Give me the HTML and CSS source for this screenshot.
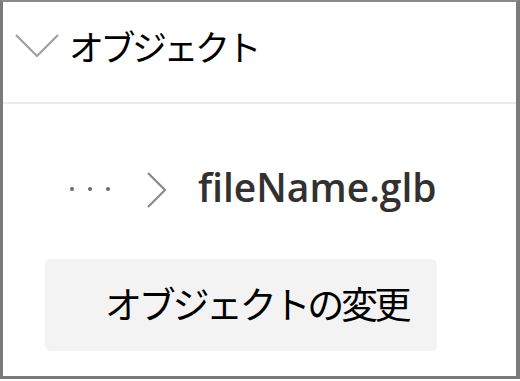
FILE: index.html
```html
<!DOCTYPE html>
<html lang="ja">
<head>
<meta charset="utf-8">
<link rel="stylesheet" href="styles.css">
</head>
<body>
<div class="frame">
  <div class="header">
    <svg class="chev-down" width="44" height="24" viewBox="0 0 44 24"><path d="M1 1 L22 22 L43 1" fill="none" stroke="#a0a0a0" stroke-width="2.2"/></svg>
    <span class="title">オブジェクト</span>
  </div>
  <div class="crumbs">
    <span class="dots"><i></i><i></i><i></i></span>
    <svg class="chev-right" width="22" height="36" viewBox="0 0 22 36"><path d="M2 1 L19 18 L2 35" fill="none" stroke="#8a8a8a" stroke-width="2.2"/></svg>
    <span class="file">fileName.glb</span>
  </div>
  <div class="actions">
    <button class="btn">オブジェクトの変更</button>
  </div>
</div>
</body>
</html>
```
FILE: styles.css
```css
html, body { margin: 0; padding: 0; background: #fff; }
.frame {
  width: 520px; height: 379px; box-sizing: border-box;
  border-left: 3px solid #7a7a7a;
  border-top: 2px solid #8a8a8a;
  border-right: 4px solid #7a7a7a;
  border-bottom: 3px solid #7a7a7a;
  display: flex; flex-direction: column;
}
.header {
  height: 102px; box-sizing: border-box;
  border-bottom: 2px solid #edebe9;
  display: flex; align-items: flex-start;
  padding-top: 16px; padding-left: 12px;
}
.chev-down { margin-top: 16px; margin-right: 10px; }
.title {
  font-family: "Noto Sans CJK JP", sans-serif;
  font-size: 35px; letter-spacing: -3.5px; line-height: 56px; color: #000; font-weight: 400;
}
.crumbs {
  display: flex; align-items: center;
  padding-left: 67px; margin-top: 65px; height: 40px;
}
.dots { display: flex; gap: 14px; margin-right: 36px; }
.dots i { width: 4px; height: 4px; border-radius: 50%; background: #6a6a6a; display: block; }
.chev-right { margin-right: 30px; margin-top: 2px; }
.file {
  font-family: "Open Sans", "Noto Sans", sans-serif;
  font-size: 39px; color: #323130; line-height: 40px; margin-top: -4px; font-weight: 600;
}
.actions { padding-left: 42px; margin-top: 50px; }
.btn {
  width: 392px; height: 92px; border: none; border-radius: 5px;
  background: #f3f3f3; padding: 0 0 4px 60px; text-align: left;
  font-family: "Noto Sans CJK JP", sans-serif; font-size: 37px; letter-spacing: -3.3px; color: #000; font-weight: 400;
}
```
